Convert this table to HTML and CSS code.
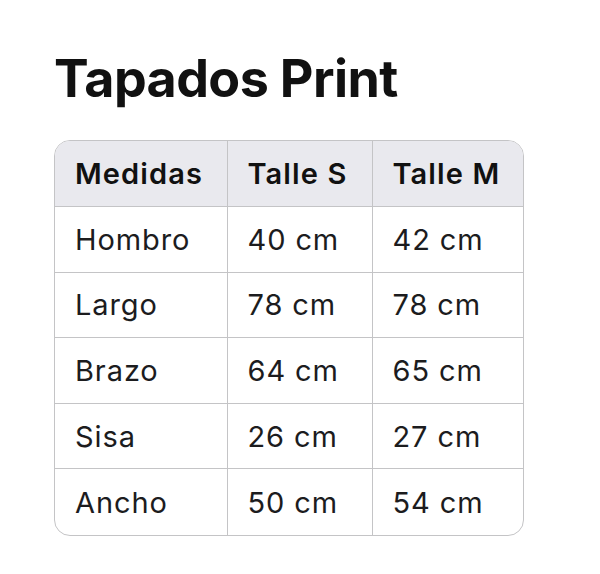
FILE: index.html
```html
<!DOCTYPE html>
<html lang="es">
<head>
<meta charset="utf-8">
<link rel="stylesheet" href="styles.css">
</head>
<body>
<main class="page">
  <h1 class="title">Tapados Print</h1>
  <div class="table-wrap">
    <table class="sizes">
      <colgroup>
        <col class="c1"><col class="c2"><col class="c3">
      </colgroup>
      <thead>
        <tr><th>Medidas</th><th>Talle S</th><th>Talle M</th></tr>
      </thead>
      <tbody>
        <tr><td>Hombro</td><td>40 cm</td><td>42 cm</td></tr>
        <tr><td>Largo</td><td>78 cm</td><td>78 cm</td></tr>
        <tr><td>Brazo</td><td>64 cm</td><td>65 cm</td></tr>
        <tr><td>Sisa</td><td>26 cm</td><td>27 cm</td></tr>
        <tr><td>Ancho</td><td>50 cm</td><td>54 cm</td></tr>
      </tbody>
    </table>
  </div>
</main>
</body>
</html>
```

FILE: styles.css
```css
html, body {
  margin: 0;
  padding: 0;
  background: #ffffff;
}
body {
  font-family: Inter, "Noto Sans", "Liberation Sans", sans-serif;
  color: #1c1c1e;
}
.page {
  padding: 53px 0 0 54px;
}
.title {
  margin: 0;
  font-size: 52px;
  line-height: 52px;
  font-weight: 700;
  letter-spacing: -0.6px;
  color: #111111;
}
.table-wrap {
  margin-top: 35px;
  width: 470px;
  border: 1.5px solid #c4c4c6;
  border-radius: 16px;
  overflow: hidden;
  box-sizing: border-box;
}
.sizes {
  width: 100%;
  border-collapse: collapse;
  table-layout: fixed;
}
.c1 { width: 172px; }
.c2 { width: 145px; }
.c3 { width: auto; }
.sizes th, .sizes td {
  height: 65.6px;
  padding: 0 0 0 20px;
  text-align: left;
  font-size: 29px;
  border: 1.5px solid #c4c4c6;
  box-sizing: border-box;
  white-space: nowrap;
}
.sizes th {
  font-weight: 600;
  letter-spacing: 1.1px;
  background: #e9e9ee;
  color: #111111;
}
.sizes td {
  font-weight: 400;
  letter-spacing: 0.9px;
  color: #1c1c1e;
}
.sizes tr:first-child th { border-top: none; }
.sizes tr:last-child td { border-bottom: none; }
.sizes th:first-child, .sizes td:first-child { border-left: none; }
.sizes th:last-child, .sizes td:last-child { border-right: none; }
```
